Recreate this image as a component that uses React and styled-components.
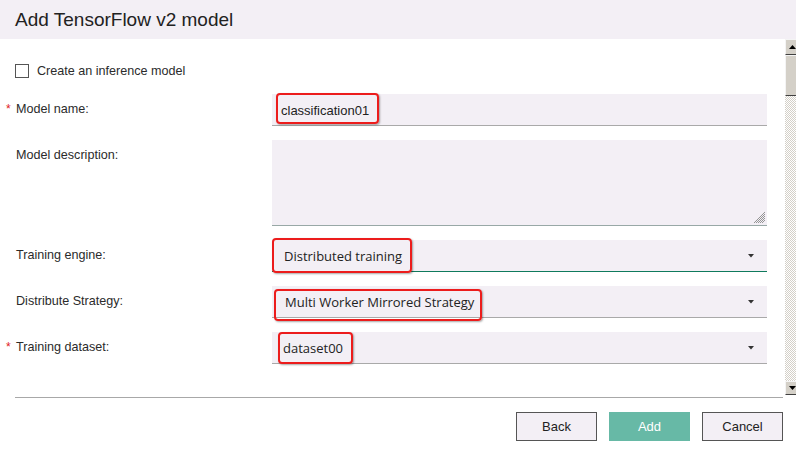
import styled, { createGlobalStyle } from "styled-components";

const GlobalStyle = createGlobalStyle`
  html, body {
    margin: 0;
    padding: 0;
    background: #fff;
    font-family: "Liberation Sans", Arial, sans-serif;
    color: #2b2b2b;
  }
`;

const Caret = () => (
  <svg width="6" height="4" viewBox="0 0 6 4">
    <path d="M0 0h6L3 3.5z" fill="#333" />
  </svg>
);

const Grip = () => (
  <svg width="14" height="14" viewBox="0 0 14 14">
    <path d="M13 2L2 13M13 6L6 13M13 10L10 13M13 4L4 13M13 8L8 13" stroke="#8a8a8a" strokeWidth="0.9" />
  </svg>
);

const Arrow = ({ down }) => (
  <svg width="7" height="4" viewBox="0 0 7 4">
    <path d={down ? "M0 0h7L3.5 4z" : "M0 4h7L3.5 0z"} fill="#000" />
  </svg>
);

const App = () => {
  return (
    <Dialog>
      <GlobalStyle />
      <Header>Add TensorFlow v2 model</Header>
      <Body>
        <Content>
          <CheckRow>
            <Box />
            <span>Create an inference model</span>
          </CheckRow>

          <Row>
            <Label>
              <Req>*</Req>Model name:
            </Label>
            <Field $pad={9}>
              <Mark $t={-1} $b={2} $l={-5} $r={-10}>
                <Value>classification01</Value>
              </Mark>
            </Field>
          </Row>

          <Row>
            <Label>
              <Req />
              Model description:
            </Label>
            <Area>
              <Grip />
            </Area>
          </Row>

          <Row>
            <Label>
              <Req />
              Training engine:
            </Label>
            <Field $pad={12} $line="#0f7a5c">
              <Mark $t={-2} $b={-1} $l={-12} $r={-10}>
                <Value $select>Distributed training</Value>
              </Mark>
              <Caret />
            </Field>
          </Row>

          <Row>
            <Label>
              <Req />
              Distribute Strategy:
            </Label>
            <Field $pad={13}>
              <Mark $t={3} $b={-3} $l={-11} $r={-8}>
                <Value $select>Multi Worker Mirrored Strategy</Value>
              </Mark>
              <Caret />
            </Field>
          </Row>

          <Row>
            <Label>
              <Req>*</Req>Training dataset:
            </Label>
            <Field $pad={11}>
              <Mark $t={0} $b={0} $l={-5} $r={-10}>
                <Value $select>dataset00</Value>
              </Mark>
              <Caret />
            </Field>
          </Row>
        </Content>

        <Scrollbar>
          <ScrollButton>
            <Arrow />
          </ScrollButton>
          <Thumb />
          <Track />
          <ScrollButton $down>
            <Arrow down />
          </ScrollButton>
        </Scrollbar>
      </Body>

      <Footer>
        <Button>Back</Button>
        <Button $primary>Add</Button>
        <Button>Cancel</Button>
      </Footer>
    </Dialog>
  );
};

export default App;

const Dialog = styled.div`
  width: 796px;
  height: 454px;
  display: flex;
  flex-direction: column;
  overflow: hidden;
`;

const Header = styled.div`
  height: 39px;
  line-height: 39px;
  padding-left: 15px;
  background: #f3eff5;
  font-size: 19px;
  color: #222;
`;

const Body = styled.div`
  height: 358px;
  display: flex;
`;

const Content = styled.div`
  flex: 1;
  padding: 0 18px 0 6px;
  overflow: hidden;
`;

const CheckRow = styled.label`
  display: flex;
  align-items: center;
  gap: 8px;
  margin: 25px 0 16px 9px;
  font-size: 12.6px;
  height: 14px;
`;

const Box = styled.span`
  width: 12px;
  height: 12px;
  border: 1px solid #555;
  background: #fff;
`;

const Row = styled.div`
  display: grid;
  grid-template-columns: 266px 1fr;
  margin-bottom: 14px;
`;

const Label = styled.div`
  font-size: 12.6px;
  line-height: 31px;
  white-space: nowrap;
`;

const Req = styled.span`
  display: inline-block;
  width: 10px;
  color: #e0201c;
  font-size: 12px;
`;

const Field = styled.div`
  height: 31px;
  display: flex;
  align-items: center;
  padding: 0 13px 0 ${(p) => p.$pad}px;
  background: #f3eff5;
  border-bottom: 1px solid ${(p) => p.$line || "#a9a9a9"};

  svg {
    margin-left: auto;
  }
`;

const Area = styled.div`
  height: 84px;
  display: flex;
  align-items: flex-end;
  justify-content: flex-end;
  padding: 0 1px 1px 0;
  background: #f3eff5;
  border-bottom: 1px solid #98a8a6;
`;

const Mark = styled.span`
  position: relative;
  display: inline-block;
  line-height: 31px;

  &::after {
    content: "";
    position: absolute;
    top: ${(p) => p.$t}px;
    bottom: ${(p) => p.$b}px;
    left: ${(p) => p.$l}px;
    right: ${(p) => p.$r}px;
    border: 2px solid #ec1c1c;
    border-radius: 4px;
    box-shadow: 1px 1px 2px rgba(0, 0, 0, 0.35);
  }
`;

const Value = styled.span`
  font-family: ${(p) =>
    p.$select ? '"Open Sans", "Liberation Sans", sans-serif' : '"Liberation Sans", Arial, sans-serif'};
  font-size: 13px;
  color: #222;
`;

const Scrollbar = styled.div`
  width: 11px;
  margin-bottom: 2px;
  display: flex;
  flex-direction: column;
`;

const ScrollButton = styled.div`
  height: ${(p) => (p.$down ? 12 : 14)}px;
  display: flex;
  align-items: center;
  justify-content: center;
  padding-left: 2px;
  background: #d4d0c8;
  border-top: 1px solid #f4f4f4;
  border-left: 1px solid #f4f4f4;
  border-bottom: 1px solid #404040;
`;

const Thumb = styled.div`
  height: 39px;
  background: #d4d0c8;
  border-top: 1px solid #f4f4f4;
  border-left: 1px solid #f4f4f4;
  border-bottom: 1px solid #404040;
`;

const Track = styled.div`
  flex: 1;
  background: repeating-conic-gradient(#d4d0c8 0 25%, #fff 0 50%) 0 0 / 2px 2px;
`;

const Footer = styled.div`
  margin: 0 13px 0 15px;
  border-top: 1px solid #a8a8a8;
  padding: 14px 0 13px;
  display: flex;
  justify-content: flex-end;
  gap: 12px;
`;

const Button = styled.button`
  width: 81px;
  height: 29px;
  border: 1px solid ${(p) => (p.$primary ? "#67b9a6" : "#555")};
  background: ${(p) => (p.$primary ? "#67b9a6" : "#f3eff5")};
  color: ${(p) => (p.$primary ? "#fff" : "#222")};
  font-family: "Liberation Sans", Arial, sans-serif;
  font-size: 13px;
  padding: 0;
`;
